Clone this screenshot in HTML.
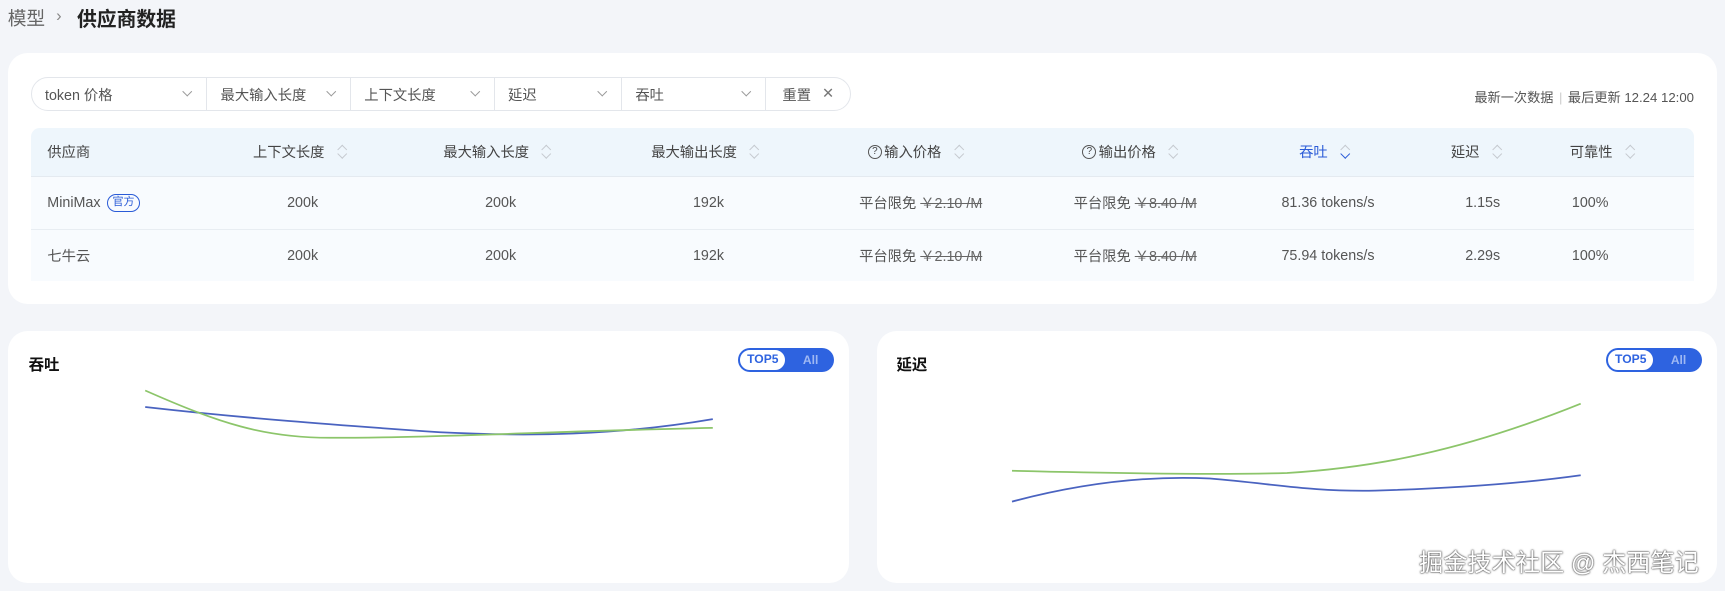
<!DOCTYPE html>
<html><head><meta charset="utf-8"><style>
html,body{margin:0;padding:0}
body{width:1568px;height:537px;zoom:1.1;background:#f3f5f9;font-family:"Liberation Sans","Noto Sans CJK SC",sans-serif;position:relative;overflow:hidden;color:#333}
.abs{position:absolute}
.card{position:absolute;background:#fff;border-radius:18px}
.filter{position:absolute;left:28px;top:70px;width:746px;height:31px;border:1px solid #e3e6eb;border-radius:16px;box-sizing:border-box;display:flex;font-size:13px;color:#555}
.filter div{height:100%;border-right:1px solid #e3e6eb;box-sizing:border-box;display:flex;align-items:center;padding-left:12px;position:relative}
.filter div:last-child{border-right:none}
.chev{position:absolute;right:14px;top:9px;width:5px;height:5px;border-right:1px solid #999;border-bottom:1px solid #999;transform:rotate(45deg)}
.tbl{position:absolute;left:28px;top:116px;width:1512px}
.hd{height:44px;background:#eef6fc;border-radius:8px 8px 0 0;border-bottom:1px solid #e4eaf0;position:relative;font-size:13px;color:#444}
.row{height:47px;background:#f8fbfe;border-bottom:1px solid #e8edf2;position:relative;font-size:13px;color:#555}
.row:last-child{border-bottom:none}
.c{position:absolute;top:0;height:100%;display:flex;align-items:center;white-space:nowrap}
.q{display:inline-block;width:11px;height:11px;border:1px solid #555;border-radius:50%;font-size:9px;line-height:11px;text-align:center;margin-right:2px}
.srt{display:inline-block;width:8px;height:14px;margin-left:12px;position:relative}
.srt:before,.srt:after{content:"";position:absolute;left:1px;width:5px;height:5px;border-left:1px solid #c5c9cf;border-top:1px solid #c5c9cf}
.srt:before{top:2px;transform:rotate(45deg)}
.srt:after{top:6px;transform:rotate(225deg)}
.srt.act:after{border-color:#2a5bd7}
s{color:#666}
.tog{position:absolute;width:87px;height:22px;border-radius:11px;background:#2e63e0;font-size:11px;font-weight:bold}
.tog span{position:absolute;left:1px;top:1px;width:43px;height:20px;border-radius:10px;background:#fff;border:1px solid #2e63e0;box-sizing:border-box;color:#2e63e0;text-align:center;line-height:18px}
.tog i{position:absolute;right:14px;top:0;line-height:22px;font-style:normal;color:#9fb8f3}
</style></head><body>
<div class="abs" style="left:7px;top:4px;font-size:17px;color:#666">模型</div>
<div class="abs" style="left:51px;top:6px;font-size:15px;color:#888">›</div>
<div class="abs" style="left:70px;top:3px;font-size:18px;font-weight:bold;color:#222">供应商数据</div>

<div class="card" style="left:7px;top:48px;width:1554px;height:228px"></div>
<div class="filter">
<div style="width:160px">token 价格<span class="chev"></span></div>
<div style="width:131px">最大输入长度<span class="chev"></span></div>
<div style="width:131px">上下文长度<span class="chev"></span></div>
<div style="width:116px">延迟<span class="chev"></span></div>
<div style="width:131px">吞吐<span class="chev"></span></div>
<div style="width:77px;padding-left:15px">重置<span style="margin-left:10px;color:#777">✕</span></div>
</div>
<div class="abs" style="right:28px;top:79px;font-size:12px;color:#555">最新一次数据<span style="color:#ccc;margin:0 5px">|</span>最后更新 12.24 12:00</div>

<div class="tbl">
<div class="hd">
<div class="c" style="left:15px">供应商</div>
<div class="c" style="left:202px">上下文长度<span class="srt"></span></div>
<div class="c" style="left:375px">最大输入长度<span class="srt"></span></div>
<div class="c" style="left:564px">最大输出长度<span class="srt"></span></div>
<div class="c" style="left:761px"><span class="q">?</span>输入价格<span class="srt"></span></div>
<div class="c" style="left:956px"><span class="q">?</span>输出价格<span class="srt"></span></div>
<div class="c" style="left:1153px;color:#2a5bd7">吞吐<span class="srt act"></span></div>
<div class="c" style="left:1291px">延迟<span class="srt"></span></div>
<div class="c" style="left:1399px">可靠性<span class="srt"></span></div>
</div>
<div class="row">
<div class="c" style="left:15px">MiniMax<span style="margin-left:6px;border:1px solid #2a5bd7;color:#2a5bd7;border-radius:9px;font-size:10px;padding:0 4px;line-height:14px">官方</span></div>
<div class="c" style="left:233px">200k</div><div class="c" style="left:413px">200k</div><div class="c" style="left:602px">192k</div>
<div class="c" style="left:753px">平台限免&nbsp;<s>￥2.10 /M</s></div>
<div class="c" style="left:948px">平台限免&nbsp;<s>￥8.40 /M</s></div>
<div class="c" style="left:1137px">81.36 tokens/s</div>
<div class="c" style="left:1304px">1.15s</div><div class="c" style="left:1401px">100%</div>
</div>
<div class="row">
<div class="c" style="left:15px">七牛云</div>
<div class="c" style="left:233px">200k</div><div class="c" style="left:413px">200k</div><div class="c" style="left:602px">192k</div>
<div class="c" style="left:753px">平台限免&nbsp;<s>￥2.10 /M</s></div>
<div class="c" style="left:948px">平台限免&nbsp;<s>￥8.40 /M</s></div>
<div class="c" style="left:1137px">75.94 tokens/s</div>
<div class="c" style="left:1304px">2.29s</div><div class="c" style="left:1401px">100%</div>
</div>
</div>

<div class="card" style="left:7px;top:301px;width:765px;height:229px"></div>
<div class="card" style="left:797px;top:301px;width:764px;height:229px"></div>
<div class="abs" style="left:26px;top:321px;font-size:14px;font-weight:bold;color:#111">吞吐</div>
<div class="abs" style="left:815px;top:321px;font-size:14px;font-weight:bold;color:#111">延迟</div>
<div class="tog" style="left:671px;top:316px"><span>TOP5</span><i>All</i></div>
<div class="tog" style="left:1460px;top:316px"><span>TOP5</span><i>All</i></div>
<svg class="abs" style="left:0;top:0" width="1568" height="537" fill="none" stroke-width="1.6">
<path d="M132 370 C220 380 300 386 400 393 C480 397 560 396 648 381" stroke="#4a63c0"/>
<path d="M132 355 C200 385 240 398 300 398 C400 398 500 392 648 389" stroke="#8cc56a"/>
<path d="M920 428 C1000 430 1100 432 1170 430 C1250 425 1330 410 1437 367" stroke="#8cc56a"/>
<path d="M920 456 C980 440 1040 432 1100 435 C1160 440 1190 447 1250 446 C1320 444 1380 440 1437 432" stroke="#4a63c0"/>
</svg>
<div class="abs" style="left:1290px;top:494px;font-size:22px;color:#fff;text-shadow:0 0 2px #444,0 0 1px #222;white-space:nowrap">掘金技术社区 @ 杰西笔记</div>
</body></html>
